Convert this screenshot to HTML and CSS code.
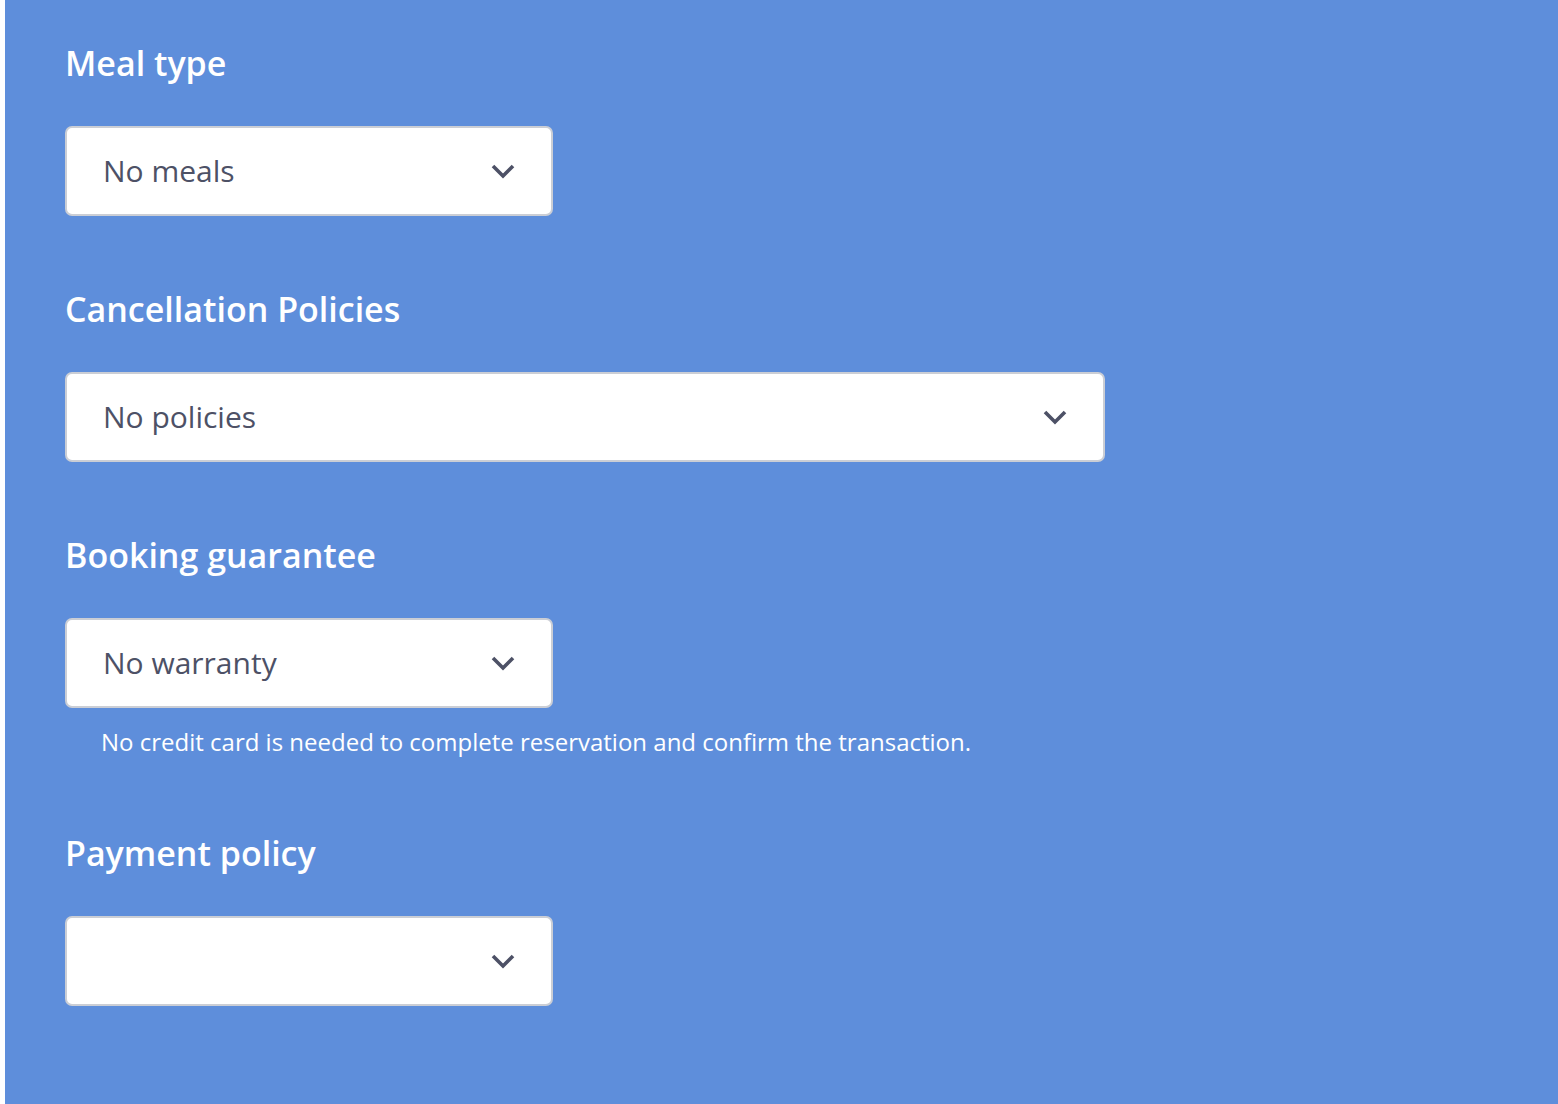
FILE: index.html
```html
<!DOCTYPE html>
<html lang="en">
<head>
<meta charset="utf-8">
<title>Booking settings</title>
<link rel="stylesheet" href="styles.css">
</head>
<body>
<main class="panel">
  <section class="field">
    <h2 class="field-title">Meal type</h2>
    <div class="select select-narrow">
      <span class="select-value">No meals</span>
      <svg class="chevron" viewBox="0 0 24 15" width="24" height="15" aria-hidden="true"><polyline points="2,2 12,12 22,2"/></svg>
    </div>
  </section>
  <section class="field">
    <h2 class="field-title">Cancellation Policies</h2>
    <div class="select select-wide">
      <span class="select-value">No policies</span>
      <svg class="chevron" viewBox="0 0 24 15" width="24" height="15" aria-hidden="true"><polyline points="2,2 12,12 22,2"/></svg>
    </div>
  </section>
  <section class="field">
    <h2 class="field-title">Booking guarantee</h2>
    <div class="select select-narrow">
      <span class="select-value">No warranty</span>
      <svg class="chevron" viewBox="0 0 24 15" width="24" height="15" aria-hidden="true"><polyline points="2,2 12,12 22,2"/></svg>
    </div>
    <p class="help">No credit card is needed to complete reservation and confirm the transaction.</p>
  </section>
  <section class="field">
    <h2 class="field-title">Payment policy</h2>
    <div class="select select-narrow">
      <span class="select-value"></span>
      <svg class="chevron" viewBox="0 0 24 15" width="24" height="15" aria-hidden="true"><polyline points="2,2 12,12 22,2"/></svg>
    </div>
  </section>
</main>
</body>
</html>
```
FILE: styles.css
```css
html, body {
  margin: 0;
  padding: 0;
  background: #ffffff;
}

body {
  font-family: "Open Sans", "Noto Sans", sans-serif;
}

.panel {
  margin-left: 5px;
  min-height: 100vh;
  background: #5e8edb;
  padding: 44px 60px 40px;
  box-sizing: border-box;
  display: flex;
  flex-direction: column;
  gap: 74px;
}

.field {
  display: flex;
  flex-direction: column;
  align-items: flex-start;
}

.field-title {
  margin: 0 0 44px;
  font-size: 34px;
  line-height: 38px;
  font-weight: 600;
  color: #ffffff;
}

.select {
  box-sizing: border-box;
  height: 90px;
  background: #ffffff;
  border: 2px solid #cbced5;
  border-radius: 7px;
  display: flex;
  align-items: center;
  justify-content: space-between;
  padding: 0 36px 0 36px;
}

.select-narrow {
  width: 488px;
}

.select-wide {
  width: 1040px;
}

.select-value {
  font-size: 30px;
  color: #4d5166;
  margin-bottom: 2px;
}

.chevron {
  flex: none;
  fill: none;
  stroke: #4d5166;
  stroke-width: 3.6;
}

.help {
  margin: 19px 0 3px;
  padding-left: 36px;
  font-size: 24px;
  line-height: 30px;
  color: #ffffff;
}
```
